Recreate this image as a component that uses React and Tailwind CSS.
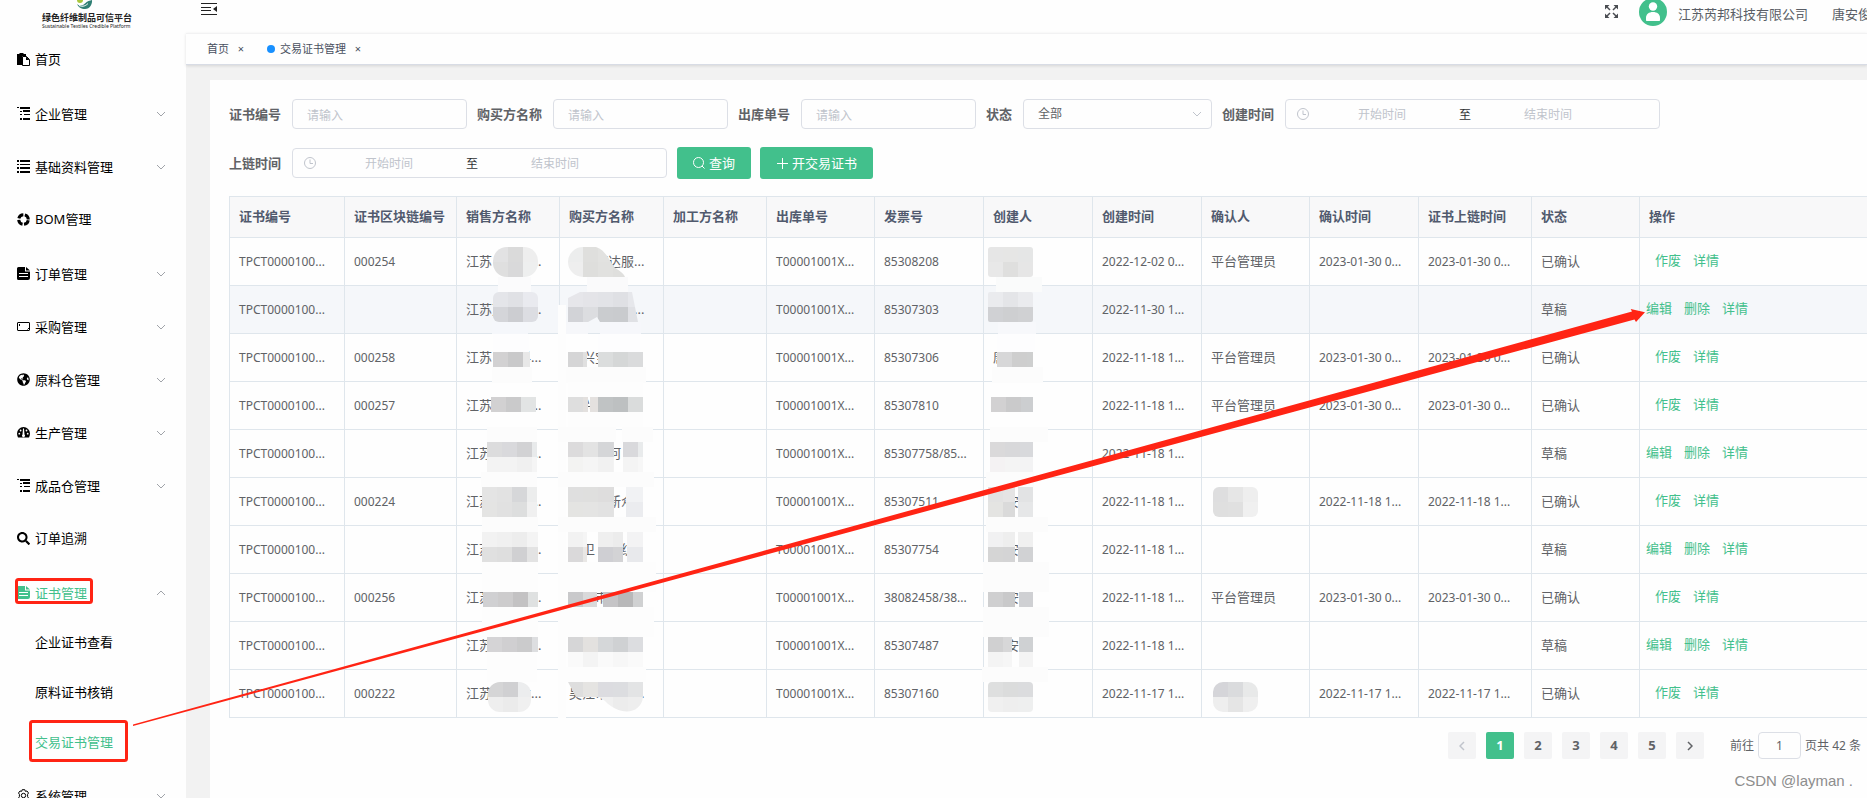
import { FaSearch, FaGlobeAmericas } from 'react-icons/fa';

function PasteIcon() {
  return (
    <svg viewBox="0 0 13 13" className="size-[13px]">
      <path fill="currentColor" d="M0 1h2.500V0h4v1H9v2H5v9H0z" />
      <path fill="#fff" stroke="currentColor" d="M5.500 3.500h4l3 3v6h-7z" />
      <path fill="currentColor" d="M9 3.500l3.500 3.500H9z" />
    </svg>
  );
}

function TreeIcon() {
  return (
    <svg viewBox="0 0 13 13" className="size-[13px]" fill="currentColor" shapeRendering="crispEdges">
      <path d="M0 0h2v1H0zM3 0h10v2H3zM3 4h2v1H3zM6 3h7v2H6zM3 7h2v1H3zM7 7h6v1H7zM3 11h2v2H3zM6 11h7v2H6z" />
    </svg>
  );
}

function ListIcon() {
  return (
    <svg viewBox="0 0 13 13" className="size-[13px]" fill="currentColor" shapeRendering="crispEdges">
      <path d="M0 0h2v2H0zM3 0h10v2H3zM0 4h2v1H0zM3 4h10v1H3zM0 7h2v2H0zM3 7h10v2H3zM0 11h2v2H0zM3 11h10v2H3z" />
    </svg>
  );
}

function RingIcon() {
  return (
    <svg viewBox="0 0 13 13" className="size-[13px]" fill="none" stroke="currentColor" strokeWidth="3">
      <circle cx="6.5" cy="6.5" r="4.8" strokeDasharray="6 1.54" strokeDashoffset="-0.8" />
    </svg>
  );
}

function DocIcon() {
  return (
    <svg viewBox="0 0 13 13" className="size-[13px]">
      <path fill="currentColor" d="M1.5 0H8v4.5h5V11a2 2 0 0 1-2 2H1.5A1.5 1.5 0 0 1 0 11.500v-10A1.500 1.500 0 0 1 1.500 0zM9 0l4 3.500H9z" />
      <path stroke="#fff" strokeWidth="1" d="M2 6.500h9M2 9.500h9" />
    </svg>
  );
}

function FrameIcon() {
  return (
    <svg viewBox="0 0 13 13" className="size-[13px]" fill="none" stroke="currentColor">
      <rect x="0.500" y="2.500" width="12" height="8" rx="0.500" />
      <path d="M2.500 4v2M10.500 9.500l1.500-1.500" />
    </svg>
  );
}

function GaugeIcon() {
  return (
    <svg viewBox="0 0 13 13" className="size-[13px]">
      <path fill="currentColor" d="M6.500 1A6.500 6.500 0 0 0 0 7.500c0 1.500.400 2.700 1 4h11c.600-1.300 1-2.500 1-4A6.500 6.500 0 0 0 6.500 1z" />
      <g fill="#fff">
        <circle cx="2.300" cy="7.700" r="0.900" />
        <circle cx="3.600" cy="4.500" r="0.900" />
        <circle cx="9.500" cy="4.500" r="0.900" />
        <circle cx="10.700" cy="7.700" r="0.900" />
        <path d="M6 2.500h1l.5 6a1.500 1.500 0 1 1-2 0z" />
      </g>
    </svg>
  );
}

function GearIcon() {
  return (
    <svg viewBox="0 0 13 13" className="size-[13px]" fill="none" stroke="currentColor">
      <path d="M5.200.700h2.600l.5 1.600 1.700-.3 1.500 2-.9 1.300v2.400l.9 1.300-1.500 2-1.700-.3-.5 1.600H5.200l-.5-1.600-1.700.3-1.500-2 .9-1.300V5.300L1.500 4 3 2l1.700.300z" />
      <circle cx="6.500" cy="6.500" r="2.200" />
    </svg>
  );
}

function Chevron({ up }) {
  return (
    <svg viewBox="0 0 10 6" className="w-[10px] h-[6px]" fill="none" stroke="currentColor">
      <path d={up ? 'M1 5l4-4 4 4' : 'M1 1l4 4 4-4'} />
    </svg>
  );
}

const menu = [
  { label: '首页', icon: <PasteIcon /> },
  { label: '企业管理', icon: <TreeIcon />, sub: true },
  { label: '基础资料管理', icon: <ListIcon />, sub: true },
  { label: 'BOM管理', icon: <RingIcon /> },
  { label: '订单管理', icon: <DocIcon />, sub: true },
  { label: '采购管理', icon: <FrameIcon />, sub: true },
  { label: '原料仓管理', icon: <FaGlobeAmericas size={13} />, sub: true },
  { label: '生产管理', icon: <GaugeIcon />, sub: true },
  { label: '成品仓管理', icon: <TreeIcon />, sub: true },
  { label: '订单追溯', icon: <FaSearch size={13} /> },
  {
    label: '证书管理',
    icon: <DocIcon />,
    sub: true,
    open: true,
    children: ['企业证书查看', '原料证书核销', '交易证书管理'],
  },
  { label: '系统管理', icon: <GearIcon />, sub: true },
];

function Logo() {
  return (
    <div className="h-[33px] shrink-0 pl-[42px] flex flex-col items-start">
      <svg viewBox="0 0 18 10" className="w-[18px] h-[10px] ml-[34px] shrink-0">
        <path d="M1 0h6c0 2-1 3-3 3S1 2 1 0z" fill="#a8c63c" />
        <path d="M1 4c3 2.500 6 1.500 8-.5 2-2.200 5-3 7-3.500.500 4-2 9-7 9-3.500 0-7-2-8-5z" fill="#2f7f74" />
        <path d="M3 5.500c4 1.800 7 0 9-2" stroke="#fff" fill="none" />
      </svg>
      <div className="mt-[2px] text-[9px] leading-[12px] font-bold text-[#222] whitespace-nowrap">绿色纤维制品可信平台</div>
      <div className="text-[5px] leading-[5px] text-[#222] whitespace-nowrap">Sustainable Textiles Credible Platform</div>
    </div>
  );
}

function Sidebar() {
  return (
    <aside className="w-[186px] shrink-0 bg-[#fefefe] flex flex-col overflow-hidden">
      <Logo />
      <nav>
        <ul>
          {menu.map((m) => (
            <li key={m.label} className={m.sub ? '' : 'mb-[2px]'}>
              <button
                className={`w-full pl-[17px] pr-5 flex items-center text-[13px] leading-5 ${m.sub ? 'h-[53px]' : 'h-[52px]'} ${m.open ? 'text-[#42c08c]' : 'text-black'}`}
              >
                {m.icon}
                <span className="ml-[5px]">{m.label}</span>
                {m.sub && (
                  <span className="ml-auto text-[#a0a3a9]">
                    <Chevron up={m.open} />
                  </span>
                )}
              </button>
              {m.children && (
                <ul className="-mt-[2px] mb-[2px]">
                  {m.children.map((c) => (
                    <li key={c}>
                      <a
                        href="#"
                        className={`h-[50px] pl-[35px] flex items-center text-[13px] leading-5 ${c === '交易证书管理' ? 'text-[#42c08c]' : 'text-black'}`}
                      >
                        {c}
                      </a>
                    </li>
                  ))}
                </ul>
              )}
            </li>
          ))}
        </ul>
      </nav>
    </aside>
  );
}

function Header() {
  return (
    <header className="h-[33px] shrink-0 flex overflow-hidden">
      <button aria-label="收起菜单" className="ml-[15px] mt-[2px] self-start">
        <svg viewBox="0 0 16 14" className="w-4 h-[14px]" fill="#222" shapeRendering="crispEdges">
          <path d="M0 1h16v1H0zM0 5h10v1H0zM0 8h10v1H0zM0 12h16v1H0z" />
          <path d="M16 4v6l-4-3z" shapeRendering="auto" />
        </svg>
      </button>
      <div className="ml-auto -mr-1 flex shrink-0 items-start text-[13px] leading-[18px] text-[#5a5e66] whitespace-nowrap">
        <button aria-label="全屏" className="mt-[5px] mr-[21px]">
          <svg viewBox="0 0 13 13" className="size-[13px]" fill="#4a4d52" stroke="#4a4d52">
            <path stroke="none" d="M0 0h4.500L0 4.500zM13 0v4.500L8.500 0zM0 13V8.500L4.500 13zM13 13H8.500L13 8.500z" />
            <path strokeWidth="1.500" d="M1 1l4 4M12 1L8 5M1 12l4-4M12 12L8 8" />
          </svg>
        </button>
        <svg viewBox="0 0 28 28" className="size-7 -mt-[2px] mr-[11px]">
          <circle cx="14" cy="14" r="14" fill="#42c08c" />
          <circle cx="14" cy="8.500" r="4.200" fill="#fff" />
          <path d="M7 22v-2c0-4 3-6 7-6s7 2 7 6v2c0 .6-.4 1-1 1H8c-.6 0-1-.4-1-1z" fill="#fff" />
        </svg>
        <span className="mt-[5px]">江苏芮邦科技有限公司</span>
        <span className="mt-[5px] ml-[24px]">唐安俊</span>
      </div>
    </header>
  );
}

function TabsBar() {
  return (
    <div className="h-[32px] shrink-0 flex items-center pl-[21px] text-[11px] leading-4 text-[#495060] border-t border-[#f2f2f3] border-b border-b-[#d8dce5] shadow-[0_1px_3px_rgba(0,0,0,0.12)] relative">
      <a href="#">首页</a>
      <button aria-label="关闭首页" className="ml-2 w-2">×</button>
      <span className="ml-[22px] size-2 rounded-full bg-[#1890ff]" />
      <a href="#" className="ml-[5px]">交易证书管理</a>
      <button aria-label="关闭交易证书管理" className="ml-2 w-2">×</button>
    </div>
  );
}

function Field({ id, label, children }) {
  return (
    <div className="flex items-center h-8">
      <label htmlFor={id} className="pr-[11px] text-[13px] leading-5 font-bold text-[#606266] whitespace-nowrap">
        {label}
      </label>
      {children}
    </div>
  );
}

function TextField({ id, label }) {
  return (
    <Field id={id} label={label}>
      <input
        id={id}
        type="text"
        placeholder="请输入"
        className="w-[175px] h-[30px] px-[14px] pt-[2px] text-xs text-[#606266] placeholder:text-[#c0c4cc] border border-[#dcdfe6] rounded-[4px] bg-transparent"
      />
    </Field>
  );
}

function RangeField({ id, label }) {
  return (
    <Field id={id} label={label}>
      <div className="w-[375px] h-[30px] pl-[11px] flex items-center border border-[#dcdfe6] rounded-[4px] text-xs">
        <svg viewBox="0 0 12 12" className="size-3 shrink-0" fill="none" stroke="#c0c4cc">
          <circle cx="6" cy="6" r="5.500" />
          <path d="M6 2.500V6.500h3" />
        </svg>
        <input id={id} type="text" placeholder="开始时间" className="w-[146px] pt-[2px] text-center placeholder:text-[#c0c4cc]" />
        <span className="w-5 pt-[2px] text-center text-[#303133]">至</span>
        <input type="text" aria-label={`${label}结束`} placeholder="结束时间" className="w-[146px] pt-[2px] text-center placeholder:text-[#c0c4cc]" />
      </div>
    </Field>
  );
}

function Filters() {
  return (
    <form className="flex flex-wrap gap-x-[10px] gap-y-[17px]" onSubmit={(e) => e.preventDefault()}>
      <TextField id="certNo" label="证书编号" />
      <TextField id="buyer" label="购买方名称" />
      <TextField id="outNo" label="出库单号" />
      <Field id="status" label="状态">
        <div className="relative">
          <select id="status" className="w-[189px] h-[30px] px-[14px] appearance-none text-xs text-[#606266] border border-[#dcdfe6] rounded-[4px]">
            <option>全部</option>
          </select>
          <span className="absolute right-[10px] top-3 text-[#c0c4cc] pointer-events-none">
            <Chevron />
          </span>
        </div>
      </Field>
      <RangeField id="createdAt" label="创建时间" />
      <RangeField id="chainAt" label="上链时间" />
      <div className="flex gap-[9px] text-[13px] leading-5 text-white">
        <button className="h-8 px-4 flex items-center gap-1 rounded-[3px] bg-[#42c08c]">
          <svg viewBox="0 0 12 12" className="size-3" fill="none" stroke="currentColor">
            <circle cx="5.500" cy="5.500" r="5" />
            <path d="M9 9l2.500 2.500" />
          </svg>
          查询
        </button>
        <button className="h-8 px-4 flex items-center gap-1 rounded-[3px] bg-[#42c08c]">
          <svg viewBox="0 0 12 12" className="size-3" stroke="currentColor" shapeRendering="crispEdges">
            <path d="M6.500 1v11M1 6.500h11" />
          </svg>
          开交易证书
        </button>
      </div>
    </form>
  );
}

const columns = [
  ['证书编号', 'w-[115px]'],
  ['证书区块链编号', 'w-[112px]'],
  ['销售方名称', 'w-[103px]'],
  ['购买方名称', 'w-[104px]'],
  ['加工方名称', 'w-[103px]'],
  ['出库单号', 'w-[108px]'],
  ['发票号', 'w-[109px]'],
  ['创建人', 'w-[109px]'],
  ['创建时间', 'w-[109px]'],
  ['确认人', 'w-[108px]'],
  ['确认时间', 'w-[109px]'],
  ['证书上链时间', 'w-[113px]'],
  ['状态', 'w-[108px]'],
  ['操作', ''],
];

const T = 'T00001001X...';
const rows = [
  ['000254', '江苏　　　...', '　　万达服...', T, '85308208', '', '2022-12-02 0...', '平台管理员', '2023-01-30 0...', '2023-01-30 0...'],
  ['', '江苏万　　...', '　　　　　...', T, '85307303', '', '2022-11-30 1...', '', '', ''],
  ['000258', '江苏　　科...', '　兴宝', T, '85307306', '唐', '2022-11-18 1...', '平台管理员', '2023-01-30 0...', '2023-01-30 0...'],
  ['000257', '江苏　　　...', '　兴　', T, '85307810', '', '2022-11-18 1...', '平台管理员', '2023-01-30 0...', '2023-01-30 0...'],
  ['', '江苏　　　...', '　　　何', T, '85307758/85...', '', '2022-11-18 1...', '', '', ''],
  ['000224', '江苏　　　...', '　　　新众', T, '85307511', '　安', '2022-11-18 1...', '', '2022-11-18 1...', '2022-11-18 1...'],
  ['', '江苏　　　...', '　卫　　纺', T, '85307754', '　安', '2022-11-18 1...', '', '', ''],
  ['000256', '江苏　　　...', '　　市', T, '38082458/38...', '　安', '2022-11-18 1...', '平台管理员', '2023-01-30 0...', '2023-01-30 0...'],
  ['', '江苏　　　...', '', T, '85307487', '　安', '2022-11-18 1...', '', '', ''],
  ['000222', '江苏　　林...', '吴江市　　...', T, '85307160', '', '2022-11-17 1...', '', '2022-11-17 1...', '2022-11-17 1...'],
];

function Cell({ text }) {
  const latin = /^[\x20-\x7e]*$/.test(text);
  return (
    <td className={`h-12 pl-[9px] border-r border-b border-[#dfe6ec] whitespace-nowrap overflow-hidden ${latin ? 'text-xs' : 'text-[13px]'}`}>
      {text}
    </td>
  );
}

function CertTable() {
  return (
    <table className="mt-[17px] w-full table-fixed border-separate border-spacing-0 border-l border-t border-[#dfe6ec] text-left text-[#606266]">
      <thead>
        <tr className="bg-[#f8f8f9] text-[13px] text-[#515a6e]">
          {columns.map(([name, width], i) => (
            <th key={name} className={`h-[41px] pl-[9px] border-b border-[#dfe6ec] font-bold whitespace-nowrap ${i < 13 ? 'border-r' : ''} ${width}`}>
              {name}
            </th>
          ))}
        </tr>
      </thead>
      <tbody>
        {rows.map((r, i) => {
          const draft = r[8] === '';
          const cells = ['TPCT0000100...', r[0], r[1], r[2], '', ...r.slice(3), draft ? '草稿' : '已确认'];
          return (
            <tr key={i} className={i === 1 ? 'bg-[#f5f7fa]' : ''}>
              {cells.map((c, j) => (
                <Cell key={j} text={c} />
              ))}
              <td className={`h-12 pb-[2px] border-b border-[#dfe6ec] text-[13px] text-[#42c08c] ${draft ? 'pl-[6px]' : 'pl-[15px]'}`}>
                <div className="flex gap-3 whitespace-nowrap">
                  {(draft ? ['编辑', '删除', '详情'] : ['作废', '详情']).map((a) => (
                    <button key={a}>{a}</button>
                  ))}
                </div>
              </td>
            </tr>
          );
        })}
      </tbody>
    </table>
  );
}

function Pagination() {
  const btn = 'w-7 h-[27px] rounded-[2px] flex items-center justify-center font-bold';
  return (
    <div className="mt-[14px] pr-[6px] flex items-center justify-end gap-[10px] text-[13px] text-[#606266]">
      <button aria-label="上一页" className={`${btn} bg-[#f4f4f5] text-[#c0c4cc]`}>
        <svg viewBox="0 0 6 10" className="w-[6px] h-[10px]" fill="none" stroke="currentColor" strokeWidth="1.500"><path d="M5 1L1 5l4 4" /></svg>
      </button>
      {[1, 2, 3, 4, 5].map((n) => (
        <button key={n} className={`${btn} ${n === 1 ? 'bg-[#42c08c] text-white' : 'bg-[#f4f4f5]'}`}>
          {n}
        </button>
      ))}
      <button aria-label="下一页" className={`${btn} bg-[#f4f4f5]`}>
        <svg viewBox="0 0 6 10" className="w-[6px] h-[10px]" fill="none" stroke="currentColor" strokeWidth="1.500"><path d="M1 1l4 4-4 4" /></svg>
      </button>
      <label className="ml-4 flex items-center gap-1 text-xs whitespace-nowrap">
        前往
        <input type="text" defaultValue="1" className="w-[43px] h-[27px] text-center border border-[#dcdfe6] rounded-[4px]" />
        页共 42 条
      </label>
    </div>
  );
}

// pixelated patches over private names: origin, corner radius, 15px blocks
const patches = [
  { x: 493, y: 247, r: 14, rows: ['e2e2e3 dadada eeeeee', 'dfdfdf d9d9da eeefef'] },
  { x: 493, y: 292, r: 6, rows: ['e4e5e9 e0e1e5 e9eaef', 'd4d5d9 cccdd1 dcdde2'] },
  { x: 493, y: 352, r: 0, w: 37, rows: ['d2d1d2 c9c9ca e8e8e8'] },
  { x: 491, y: 397, r: 0, rows: ['d2d1d2 cacacb e2e4e4'] },
  { x: 487, y: 442, r: 0, w: 50, rows: ['dcdcdd d9d9dc d2d2d4 e8eaeb', 'f3f3f3 f3f3f3 f0f0f0 f5f5f5'] },
  { x: 482, y: 487, r: 0, w: 55, rows: ['e4e4e4 e2e2e2 d6d7d9 eceded', 'e4e4e3 e1e1e1 dddede f0f0f0'] },
  { x: 482, y: 532, r: 0, w: 56, rows: ['f2f2f2 f0f0f0 ededed f4f4f4', 'e0e0e0 dedede d0d0d2 e3e3e3'] },
  { x: 483, y: 592, r: 0, w: 55, rows: ['d0d0d2 cdcccd c3c2c3 dfe1e1'] },
  { x: 487, y: 637, r: 0, w: 51, rows: ['d5d4d6 d0cfd1 cbcbcc dddee0'] },
  { x: 488, y: 682, r: 12, w: 43, rows: ['d5d5d6 d0d0d2 ecedee', 'eeeeee ebebeb f0f0f0'] },

  { x: 568, y: 247, shape: 'M583 247h13c9 3 13 12 18 20c5 4 9 5 11 10h-42a15 15 0 0 1 0-30z', rows: ['eceded dfdfdd e2e2e0 e2e2e0', 'eeeeee dededc e1e1df dfdfdd'] },
  { x: 568, y: 292, shape: 'M568 298l12-6h52l6 30h-38l-3-5-9 5h-20z', rows: ['e6e6ea e4e4e8 e2e3e7 dfe0e4 e6e7eb', 'd2d3d7 dcdde0 cacccf c9cbce e0e1e5'] },
  { x: 568, y: 352, r: 0, w: 19, rows: ['d5d5d6 e0e0e0'] },
  { x: 598, y: 352, r: 0, rows: ['dbdddd d5d7d7 dadbdc'] },
  { x: 568, y: 397, r: 0, w: 20, rows: ['dedede e3e0de'] },
  { x: 590, y: 397, r: 0, w: 8, rows: ['e4e1df'] },
  { x: 598, y: 397, r: 0, rows: ['c0c3c4 bdc0c1 dadcdc'] },
  { x: 568, y: 442, r: 0, w: 46, rows: ['dcdbdc e3e3e3 d5d6d8 d8d8da', 'f3f3f2 f5f5f5 f1f1f1 f3f3f3'] },
  { x: 623, y: 442, r: 0, w: 20, rows: ['d9d9dc e9ebec', 'f4f4f4 f7f7f7'] },
  { x: 568, y: 487, r: 0, w: 46, rows: ['dfdfdf dfdfde dedddd dddddd', 'e4e4e2 e4e4e3 e2e2e2 e3e3e3'] },
  { x: 626, y: 487, r: 0, w: 17, rows: ['f1f2f4 f1f2f4', 'ebecef ebecef'] },
  { x: 568, y: 532, r: 0, w: 19, rows: ['f2f2f2 f5f5f5', 'dad9da e9e7e5'] },
  { x: 598, y: 532, r: 0, w: 25, rows: ['efefef ececec', 'cfcfd3 d3d3d5'] },
  { x: 627, y: 532, r: 0, w: 16, rows: ['f3f3f4 f3f3f4', 'e8e9ec e8e9ec'] },
  { x: 568, y: 592, r: 0, w: 29, rows: ['c9c9cb d9d9da'] },
  { x: 603, y: 592, r: 0, w: 40, rows: ['c5c4c6 b8b8b9 d0d1d2'] },
  { x: 568, y: 637, r: 0, rows: ['d6d6d7 e3e1df d5d7d9 cfd1d3 dcdde0', 'fafafa f4f4f4 fafafa f7f7f7 fafafa'] },
  { x: 568, y: 682, shape: 'M568 682h75v15c-2 18-24 19-38 4l-6-4h-23z', rows: ['dedede e5e4e2 dcdce0 dcdde0 e3e4e5', 'eeeeee eeeeee f0f0f0 ececec eeeeee'] },

  { x: 988, y: 247, r: 3, rows: ['e6e6e6 e6e6e5 e5e6e6', 'e8e8e8 dfdfde e6e6e6'] },
  { x: 988, y: 292, r: 2, rows: ['eaebee e4e5e8 eaebee', 'd0d1d4 cecfd1 d0d1d3'] },
  { x: 997, y: 352, r: 0, w: 36, rows: ['d7d7d8 cecece cecfcf'] },
  { x: 991, y: 397, r: 0, w: 42, rows: ['d2d1d2 cacacb ccced0'] },
  { x: 990, y: 442, r: 0, w: 43, rows: ['dad9da d8d8da d8d9dc', 'f4f2f3 f4f4f4 f3f3f4'] },
  { x: 988, y: 487, r: 0, w: 27, rows: ['e2e2e2 e5e4e4', 'e4e4e2 dadada'] },
  { x: 1018, y: 487, r: 0, rows: ['e2e3e4', 'e6e7e8'] },
  { x: 988, y: 532, r: 0, w: 27, rows: ['f1f1f2 eeeeee', 'd5d5d5 d4d4d5'] },
  { x: 1018, y: 532, r: 0, rows: ['f0f0f0', 'd1d2d4'] },
  { x: 988, y: 592, r: 0, w: 27, rows: ['cfcfd0 c9c9ca'] },
  { x: 1019, y: 592, r: 0, w: 14, rows: ['cfd0d3'] },
  { x: 988, y: 637, r: 0, w: 24, rows: ['d0d0d1 d7d7d8', 'f4f4f4 f6f6f6'] },
  { x: 1019, y: 637, r: 0, w: 14, rows: ['cfd1d3', 'f4f4f4'] },
  { x: 988, y: 682, r: 4, rows: ['dedfdf dbdcdc dbdcde', 'f0f0f0 eeeeee eeefef'] },

  { x: 1213, y: 487, r: 6, rows: ['dededf e6e6e6 eeeeee', 'dfdfdf e0e0e0 f0f0f0'] },
  { x: 1213, y: 682, r: 10, rows: ['d5d5d9 dadbdd e8e9e9', 'eeeeee e5e5e5 efefef'] },
];

// blank smears that hide parts of the grid lines
const smears = [
  [498, 277, 33, 15, '#fbfbfc'], [587, 277, 41, 15, '#fafafb'], [996, 277, 46, 15, '#fafbfb'],
  [492, 322, 36, 12, '#f5f7fb'], [558, 322, 30, 12, '#f6f7fa'], [600, 322, 41, 12, '#f6f7fb'], [998, 322, 38, 12, '#f7f8fb'],
  [493, 334, 36, 18, '#fdfdfe'], [598, 334, 42, 18, '#fdfdfe'], [997, 334, 38, 18, '#fdfdfe'],
  [558, 305, 8, 413, '#fdfdfd'], [492, 367, 40, 16, '#fcfcfc'], [566, 367, 80, 16, '#fcfcfc'], [992, 367, 51, 16, '#fcfcfc'],
  [568, 382, 75, 15, '#fdfdfd'], [568, 412, 75, 15, '#fdfdfd'],
  [487, 427, 50, 15, '#fcfcfc'], [558, 427, 58, 15, '#fcfcfc'], [622, 427, 31, 15, '#fcfcfc'], [990, 427, 58, 15, '#fcfcfc'],
  [481, 472, 56, 15, '#fcfcfc'], [558, 472, 96, 15, '#fcfcfc'], [986, 472, 48, 15, '#fcfcfc'],
  [482, 517, 56, 15, '#fcfcfc'], [558, 517, 98, 15, '#fcfcfc'], [986, 517, 62, 15, '#fcfcfc'],
  [482, 562, 56, 30, '#fdfdfd'], [558, 562, 98, 30, '#fdfdfd'], [983, 562, 66, 30, '#fcfcfc'],
  [482, 607, 56, 30, '#fdfdfd'], [562, 607, 92, 30, '#fdfdfd'], [983, 607, 66, 30, '#fcfcfc'],
  [487, 652, 50, 30, '#fdfdfd'], [564, 667, 82, 15, '#fdfdfd'], [982, 667, 66, 15, '#fcfcfc'],
];

function Patch({ p, id }) {
  const blocks = p.rows.map((r) => r.split(' '));
  const w = p.w || blocks[0].length * 15;
  const h = blocks.length * 15;
  return (
    <g clipPath={`url(#${id})`}>
      <clipPath id={id}>
        {p.shape ? <path d={p.shape} /> : <rect x={p.x} y={p.y} width={w} height={h} rx={p.r} />}
      </clipPath>
      {blocks.map((r, j) =>
        r.map((c, i) => <rect key={`${i}-${j}`} x={p.x + i * 15} y={p.y + j * 15} width="15" height="15" fill={`#${c}`} />)
      )}
    </g>
  );
}

function Annotations() {
  return (
    <svg aria-hidden="true" className="absolute top-0 left-0 w-full h-full pointer-events-none">
      {smears.map(([x, y, w, h, fill], i) => (
        <rect key={i} x={x} y={y} width={w} height={h} fill={fill} />
      ))}
      {patches.map((p, i) => (
        <Patch key={i} p={p} id={`patch${i}`} />
      ))}
      <g fill="#000" fillOpacity="0.025" fontFamily="Liberation Mono, monospace" fontStyle="italic" fontWeight="bold" fontSize="19">
        {[62, 480, 898, 1316, 1734].map((x) =>
          [19, 572].map((y) => (
            <g key={`${x}-${y}`}>
              <text x={x} y={y}>172.27.15.167</text>
              <text x={x} y={y + 26}>DESKTOP-M9MVPA2</text>
            </g>
          ))
        )}
      </g>
      <g fill="none" stroke="#ff2414" strokeWidth="3">
        <rect x="16.500" y="579.500" width="75" height="23" rx="2" />
        <rect x="30.500" y="721.500" width="96" height="39" rx="2" />
      </g>
      <path fill="#ff2414" d="M133 724.500L1632 311.500L1630.700 309L1645 312.300L1636 322L1634.500 319.500L133 726z" />
    </svg>
  );
}

export default function App() {
  return (
    <div className="relative h-screen flex overflow-hidden bg-[#fefefe] font-['Noto_Sans','Noto_Sans_CJK_SC',sans-serif]">
      <Sidebar />
      <div className="flex-1 min-w-0 flex flex-col">
        <Header />
        <TabsBar />
        <main className="flex-1 min-h-0 pl-6 pt-[15px] bg-[#f2f2f2]">
          <div className="h-full bg-[#fefefe] pl-[19px] pt-[18px]">
            <Filters />
            <CertTable />
            <Pagination />
          </div>
        </main>
      </div>
      <Annotations />
      <p className="absolute right-[14px] bottom-[7px] text-[15px] leading-5 text-[#8d8d8d] whitespace-pre font-['Liberation_Sans',Arial,sans-serif]">
        CSDN @layman .
      </p>
    </div>
  );
}
